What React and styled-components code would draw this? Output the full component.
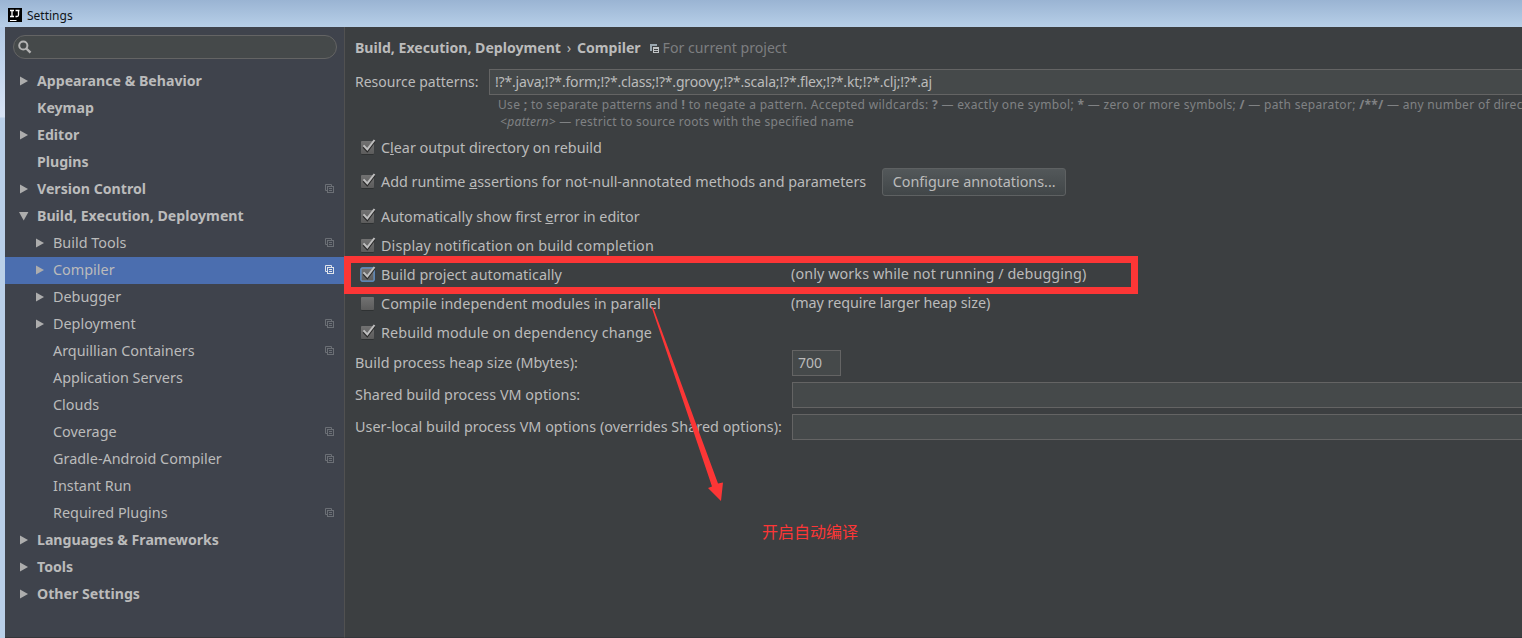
import React from "react";
import styled, { createGlobalStyle, css } from "styled-components";

const Global = createGlobalStyle`
  * { box-sizing: border-box; }
  html, body { margin: 0; padding: 0; overflow: hidden; background: #3c3f41; }
`;

const Window = styled.div`
  position: relative;
  width: 1522px;
  height: 638px;
  display: flex;
  flex-direction: column;
  overflow: hidden;
  background: #bad0e9;
  font-family: "Noto Sans", "Open Sans", sans-serif;
  font-size: 14.35px;
  line-height: 19px;
  color: #bbbbbb;
  white-space: nowrap;
`;

const TitleBar = styled.header`
  flex: none;
  height: 27px;
  display: flex;
  align-items: center;
  gap: 5px;
  padding: 3px 0 0 8px;
  background: linear-gradient(#9ab4d3, #b7cfe8);
  color: #101418;
  font-size: 12px;
`;

const Frame = styled.div`
  flex: 1;
  min-height: 0;
  display: flex;
  padding-left: 5px;
  background: linear-gradient(#b3cae6, #d7e3f5 88px, #d7e3f5 90px, #bad0e9 91px);
`;

const Sidebar = styled.nav`
  flex: none;
  width: 340px;
  display: flex;
  flex-direction: column;
  padding-top: 8px;
  background: #3f434c;
  border-right: 1px solid #515151;
  border-bottom: 1px solid #34363a;
`;

const SearchBox = styled.div`
  flex: none;
  height: 24px;
  margin: 0 7px 9px 8px;
  padding-left: 4px;
  display: flex;
  align-items: center;
  border: 1px solid #646464;
  border-radius: 12px;
  background: #45494a;
`;

const TreeRow = styled.div`
  flex: none;
  height: 27px;
  display: flex;
  align-items: center;
  padding: 0 10px 2px ${(p) => (p.$depth ? 29 : 13)}px;
  font-weight: ${(p) => (p.$depth ? 400 : 700)};
  font-size: ${(p) => (p.$depth ? 14.4 : 14.15)}px;
  background: ${(p) => (p.$selected ? "#4b6eaf" : "transparent")};
`;

const ArrowSlot = styled.span`
  width: 19px;
  height: 25px;
  display: flex;
  align-items: center;
`;

const Label = styled.span`
  padding-bottom: 2px;
  letter-spacing: ${(p) => p.$ls || 0}px;
  ${(p) => p.$size && css`font-size: ${p.$size}px;`}
  ${(p) => p.$muted && css`color: #7c7e80;`}
`;

const CheckLabel = styled.span`
  letter-spacing: ${(p) => p.$ls || 0}px;
`;

const Crumb = styled.span`
  padding-bottom: 2px;
  font-size: 14.1px;
  font-weight: 700;
`;

const CrumbSeparator = styled.span`
  width: 16px;
  padding-bottom: 2px;
  text-align: center;
`;

const Spacer = styled.span`
  flex: 1;
`;

const Main = styled.main`
  flex: 1;
  min-width: 0;
  display: flex;
  flex-direction: column;
  padding-left: 10px;
  background: #3c3f41;
  border-bottom: 1px solid #34363a;
`;

const FormRow = styled.div`
  flex: none;
  height: ${(p) => p.$h}px;
  display: flex;
  align-items: center;
  padding-top: ${(p) => p.$pt || 0}px;
  padding-bottom: ${(p) => p.$pb || 0}px;
`;

const LabelColumn = styled.div`
  flex: none;
  display: flex;
  align-items: center;
  width: ${(p) => p.$w}px;
  padding-left: ${(p) => p.$indent || 0}px;
`;

const Field = styled.div`
  flex: none;
  width: ${(p) => p.$w}px;
  height: 26px;
  display: flex;
  align-items: center;
  padding-left: 5px;
  border: 1px solid #646464;
  background: #45494a;
`;

const Hints = styled.div`
  flex: none;
  height: 35px;
  padding: 1px 0 0 143px;
  line-height: 17px;
  font-size: 12px;
  color: #808284;
`;

const HintLine = styled.div`
  padding-left: ${(p) => p.$indent || 0}px;
  letter-spacing: ${(p) => p.$ls}px;
`;

const Button = styled.button`
  width: 184px;
  height: 28px;
  margin: 1px 0 0 16px;
  padding: 0 0 2px;
  border: 1px solid #5e6162;
  border-radius: 3px;
  background: linear-gradient(#53585a, #414648);
  color: #bbbbbb;
  font: inherit;
`;

const CheckSlot = styled.span`
  width: 26px;
  height: 19px;
  padding-left: 4px;
  display: flex;
  align-items: flex-start;
`;

const Highlight = styled.div`
  position: absolute;
  left: 344px;
  top: 256px;
  width: 794px;
  height: 38px;
  border: 7px solid #fc3636;
`;

const ArrowMark = styled.svg`
  position: absolute;
  left: 640px;
  top: 290px;
`;

const Note = styled.div`
  position: absolute;
  left: 762px;
  top: 519px;
  font: 400 16px/24px "Noto Sans CJK SC", sans-serif;
  color: #fc3636;
`;

const Logo = () => (
  <svg width="14" height="14" viewBox="0 0 14 14">
    <rect width="14" height="14" fill="#000" />
    <path d="M2 2.5h4M4 2.5v6M2 8.5h4M7.5 2.5h4M10.5 2.5v4.5q0 1.5-1.5 1.5h-1.5" stroke="#fff" strokeWidth="1.3" fill="none" />
    <path d="M2 12.5h6.5" stroke="#fff" strokeWidth="1" />
  </svg>
);

const SearchIcon = () => (
  <svg width="14" height="14" viewBox="0 0 14 14" fill="none" stroke="#b4b4b4">
    <circle cx="5.3" cy="5.5" r="4.1" strokeWidth="2" />
    <path d="M8.3 8.5l4.2 4.2" strokeWidth="2.4" />
  </svg>
);

const TreeArrow = ({ open }) => (
  <svg width="12" height="12" viewBox="0 0 12 12" fill="#adadad">
    <path d={open ? "M1 2h9.4l-4.7 8.4z" : "M2 1.4l8 4.6-8 4.6z"} />
  </svg>
);

const CopyIcon = ({ color = "#6b6f75" }) => (
  <svg width="9" height="9" viewBox="0 0 9 9" fill="none" stroke={color}>
    <path d="M2 6.5H.5v-6h6V2" />
    <rect x="2.5" y="2.5" width="6" height="6" />
    <path d="M4 4.5h3M4 6.5h3" />
  </svg>
);

const ProjectIcon = () => (
  <svg width="9" height="9" viewBox="0 0 9 9">
    <path d="M0 0h7v2H2v5H0z" fill="#9aa7b0" />
    <rect x="3" y="3" width="6" height="6" fill="#c0c3c5" />
    <path d="M4 5.5h4M4 7.5h4" stroke="#3c3f41" />
  </svg>
);

const CheckBox = ({ checked, focused }) => (
  <svg width="18" height="18" viewBox="0 0 18 18">
    <defs>
      <linearGradient id="box" x1="0" y1="0" x2="0" y2="1">
        <stop offset="0" stopColor="#727272" />
        <stop offset="1" stopColor="#5c5c5c" />
      </linearGradient>
    </defs>
    {focused && <rect x="1" y="2" width="15" height="15" rx="3" fill="#4a6d97" />}
    <path d="M2.5 16.5h12" stroke={focused ? "#4a6d97" : "#2f3233"} />
    <rect x="2" y="3" width="13" height="13" rx="1" fill="url(#box)" stroke={focused ? "#6c9bcf" : "none"} />
    {checked && <path d="M4.5 8.8l3.8 4L15.5 3.2" stroke="#2b2b2b" strokeWidth="2.4" fill="none" />}
    {checked && <path d="M4.5 7.4l3.8 4L15.5 2" stroke="#bebebe" strokeWidth="2" fill="none" />}
  </svg>
);

const tree = [
  ["Appearance & Behavior", 0, "closed"],
  ["Keymap", 0],
  ["Editor", 0, "closed"],
  ["Plugins", 0],
  ["Version Control", 0, "closed", true],
  ["Build, Execution, Deployment", 0, "open"],
  ["Build Tools", 1, "closed", true],
  ["Compiler", 1, "closed", true],
  ["Debugger", 1, "closed"],
  ["Deployment", 1, "closed", true],
  ["Arquillian Containers", 1, null, true],
  ["Application Servers", 1],
  ["Clouds", 1],
  ["Coverage", 1, null, true],
  ["Gradle-Android Compiler", 1, null, true],
  ["Instant Run", 1],
  ["Required Plugins", 1, null, true],
  ["Languages & Frameworks", 0, "closed"],
  ["Tools", 0, "closed"],
  ["Other Settings", 0, "closed"],
];

const Option = ({ h, pt, checked, focused, spacing, note, noteSpacing, children }) => (
  <FormRow $h={h} $pt={pt}>
    <LabelColumn $w={436}>
      <CheckSlot><CheckBox checked={checked} focused={focused} /></CheckSlot>
      <CheckLabel $ls={spacing}>{children}</CheckLabel>
    </LabelColumn>
    {note && <Label $ls={noteSpacing}>{note}</Label>}
  </FormRow>
);

export default function App() {
  return (
    <Window>
      <Global />
      <TitleBar><Logo /><span>Settings</span></TitleBar>
      <Frame>
        <Sidebar>
          <SearchBox><SearchIcon /></SearchBox>
          {tree.map(([name, depth, arrow, project]) => (
            <TreeRow key={name} $depth={depth} $selected={name === "Compiler"}>
              <ArrowSlot>{arrow && <TreeArrow open={arrow === "open"} />}</ArrowSlot>
              <span>{name}</span>
              <Spacer />
              {project && <CopyIcon color={name === "Compiler" ? "#dfe3ea" : undefined} />}
            </TreeRow>
          ))}
        </Sidebar>
        <Main>
          <FormRow $h={42}>
            <Crumb>Build, Execution, Deployment</Crumb>
            <CrumbSeparator>›</CrumbSeparator>
            <Crumb>Compiler</Crumb>
            <LabelColumn $w={22} $indent={9}><ProjectIcon /></LabelColumn>
            <Label $muted $size={14.15}>For current project</Label>
          </FormRow>
          <FormRow $h={26}>
            <LabelColumn $w={134}><Label $size={14}>Resource patterns:</Label></LabelColumn>
            <Field $w={1060}><Label $size={14} $ls={-0.18}>!?*.java;!?*.form;!?*.class;!?*.groovy;!?*.scala;!?*.flex;!?*.kt;!?*.clj;!?*.aj</Label></Field>
          </FormRow>
          <Hints>
            <HintLine $ls={0.325}>Use <b>;</b> to separate patterns and <b>!</b> to negate a pattern. Accepted wildcards: <b>?</b> — exactly one symbol; <b>*</b> — zero or more symbols; <b>/</b> — path separator; <b>/**/</b> — any number of directories;</HintLine>
            <HintLine $ls={0.29} $indent={2}><i>&lt;pattern&gt;</i> — restrict to source roots with the specified name</HintLine>
          </Hints>
          <Option h={34} pt={1} checked>C<u>l</u>ear output directory on rebuild</Option>
          <FormRow $h={36} $pb={1}>
            <CheckSlot><CheckBox checked /></CheckSlot>
            <CheckLabel $ls={-0.015}>Add runtime <u>a</u>ssertions for not-null-annotated methods and parameters</CheckLabel>
            <Button>Configure annotations...</Button>
          </FormRow>
          <Option h={31} pt={2} checked spacing={-0.03}>Automatically show first <u>e</u>rror in editor</Option>
          <Option h={29} checked spacing={0.13}>Display notification on build completion</Option>
          <Option h={29} checked focused spacing={0.05} note="(only works while not running / debugging)" noteSpacing={0.1}>Build project automatically</Option>
          <Option h={29} spacing={0.06} note="(may require larger heap size)" noteSpacing={-0.05}>Compile independent modules in parallel</Option>
          <Option h={29} checked spacing={0.11}>Rebuild module on dependency change</Option>
          <FormRow $h={32}>
            <LabelColumn $w={437}><Label $ls={0.03}>Build process heap size (Mbytes):</Label></LabelColumn>
            <Field $w={49}><Label $size={14}>700</Label></Field>
          </FormRow>
          <FormRow $h={32}>
            <LabelColumn $w={437}><Label $ls={0.03}>Shared build process VM options:</Label></LabelColumn>
            <Field $w={760} />
          </FormRow>
          <FormRow $h={32}>
            <LabelColumn $w={437}><Label $ls={0.03}>User-local build process VM options (overrides Shared options):</Label></LabelColumn>
            <Field $w={760} />
          </FormRow>
        </Main>
      </Frame>
      <Highlight />
      <ArrowMark width="100" height="220" viewBox="640 290 100 220">
        <path d="M651.5 307H653L718 483.5L723 482.5L721 501L708 488L712 486.5Z" fill="#fc3636" />
      </ArrowMark>
      <Note>开启自动编译</Note>
    </Window>
  );
}
